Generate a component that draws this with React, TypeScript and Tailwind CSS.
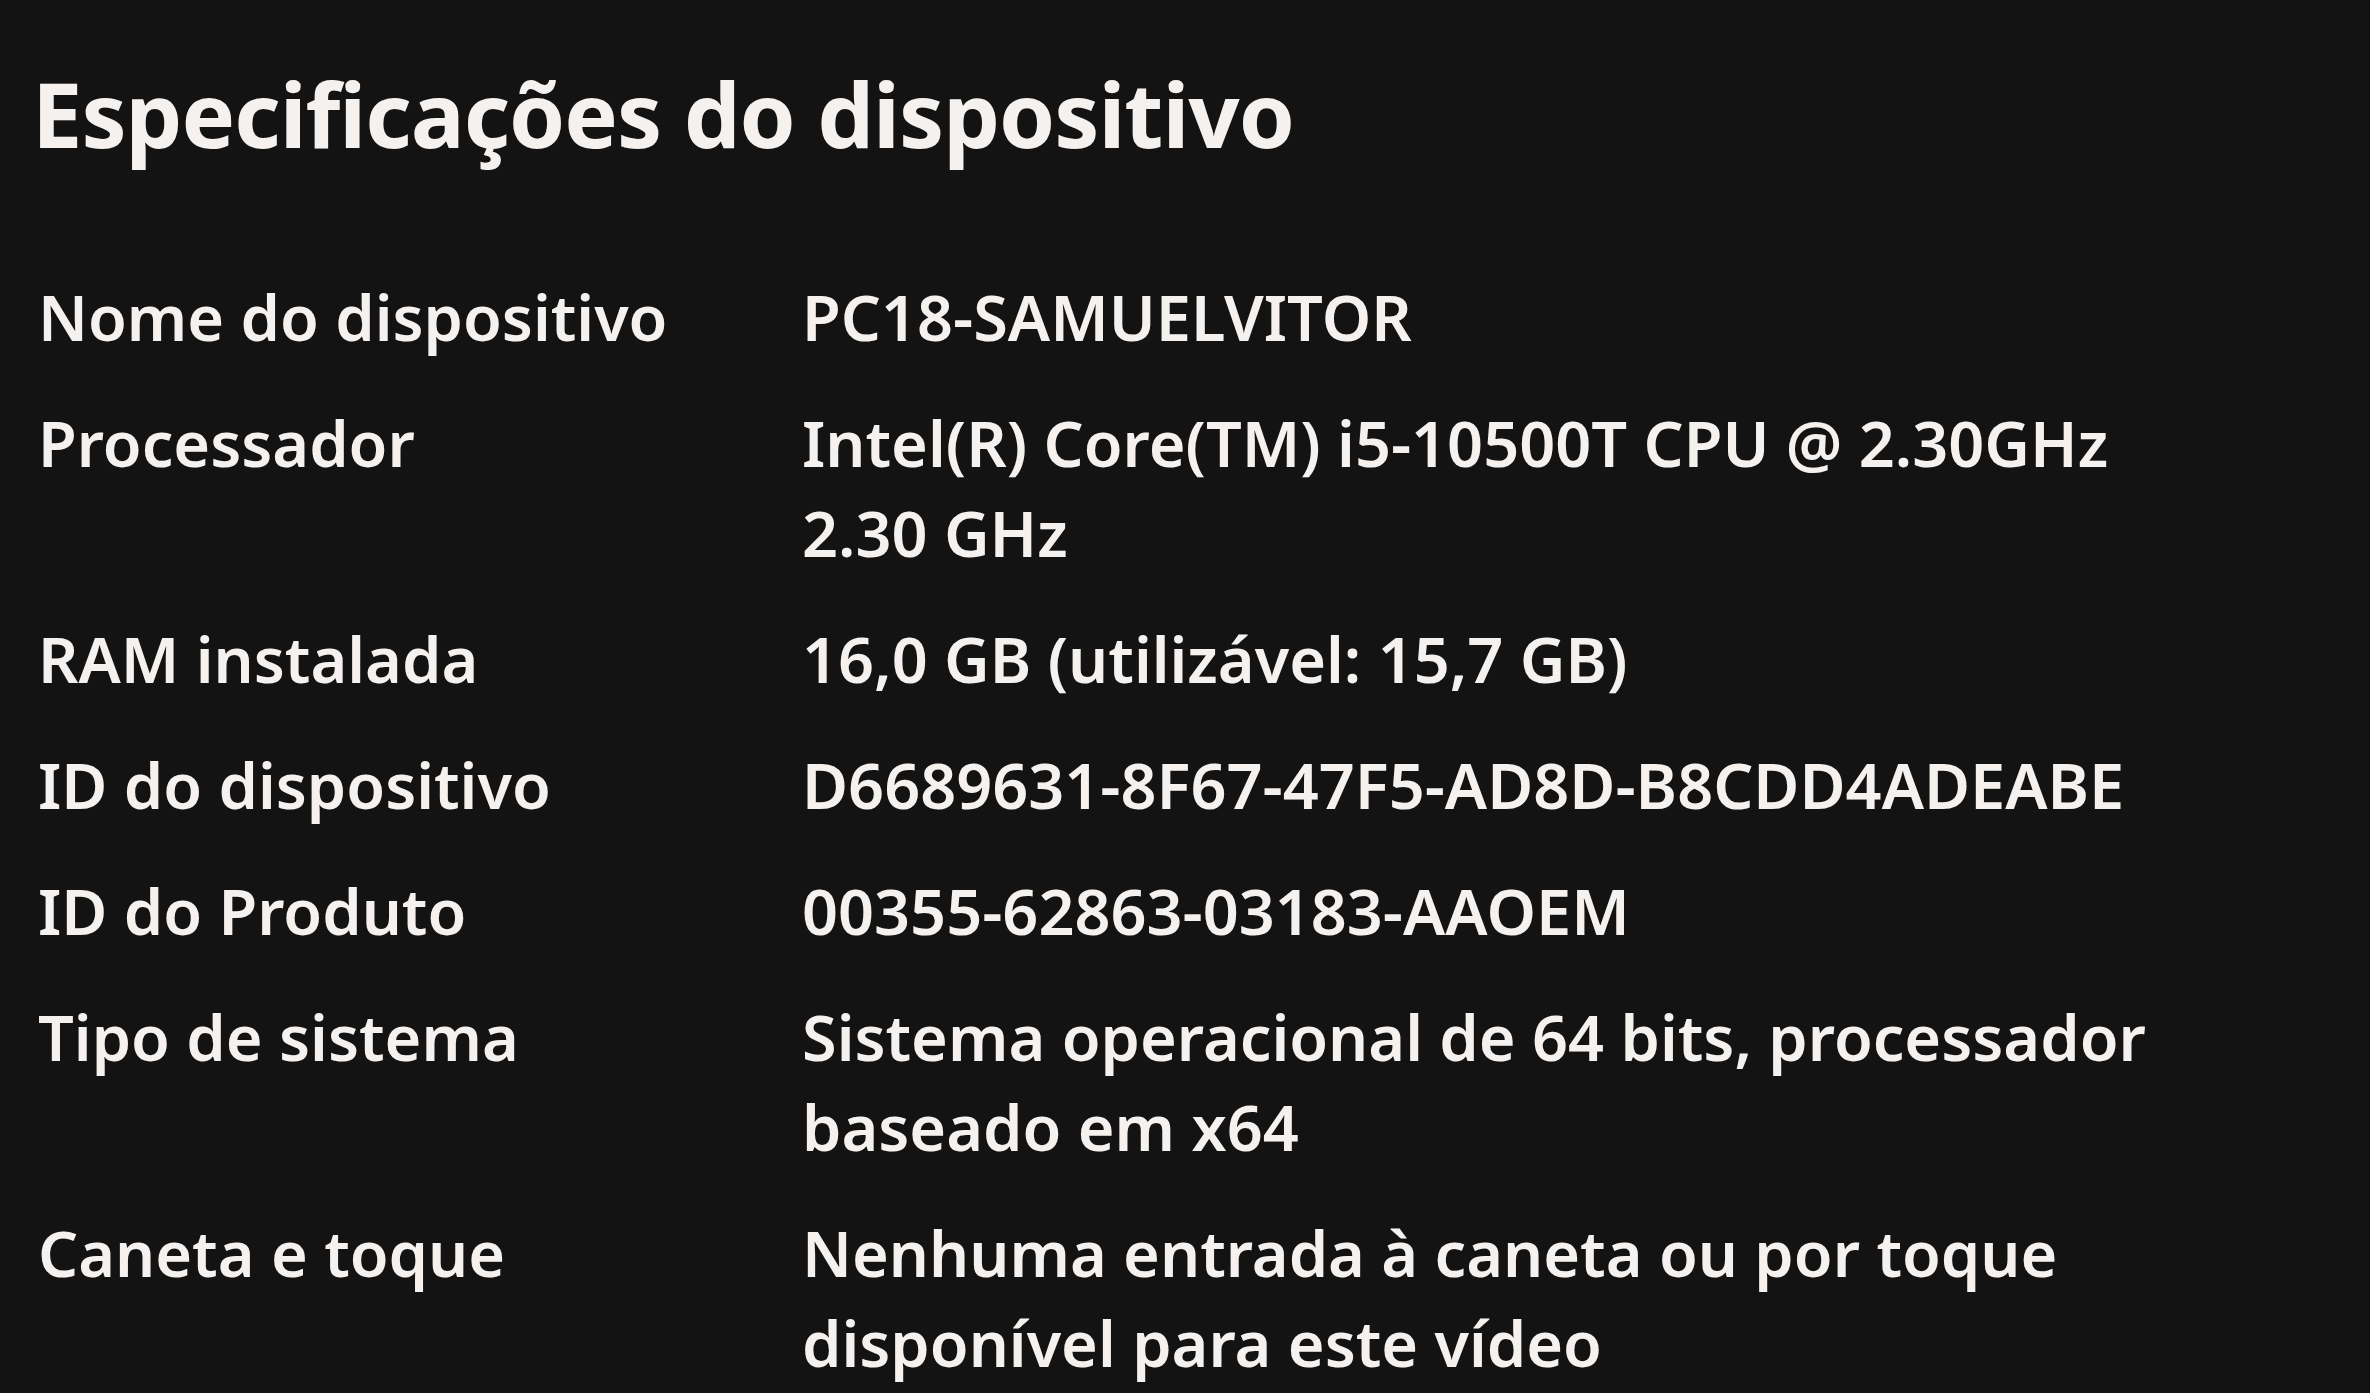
const specs: { label: string; value: string[] }[] = [
  { label: "Nome do dispositivo", value: ["PC18-SAMUELVITOR"] },
  { label: "Processador", value: ["Intel(R) Core(TM) i5-10500T CPU @ 2.30GHz", "2.30 GHz"] },
  { label: "RAM instalada", value: ["16,0 GB (utilizável: 15,7 GB)"] },
  { label: "ID do dispositivo", value: ["D6689631-8F67-47F5-AD8D-B8CDD4ADEABE"] },
  { label: "ID do Produto", value: ["00355-62863-03183-AAOEM"] },
  { label: "Tipo de sistema", value: ["Sistema operacional de 64 bits, processador", "baseado em x64"] },
  { label: "Caneta e toque", value: ["Nenhuma entrada à caneta ou por toque", "disponível para este vídeo"] },
]

export default function App() {
  return (
    <div className="min-h-screen w-full bg-[#131314] text-[#f4f1ee] font-['Noto_Sans',sans-serif] overflow-hidden">
      <div className="pl-[32px] pt-[52px]">
        <h1 className="text-[90px] leading-[122px] font-bold tracking-[-1px]">Especificações do dispositivo</h1>

        <div className="mt-[98px] pl-[6px] flex flex-col gap-[36px]">
          {specs.map((s) => (
            <div key={s.label} className="flex text-[63px] leading-[90px] font-semibold">
              <div className="w-[764px] shrink-0">{s.label}</div>
              <div className="flex flex-col">
                {s.value.map((line) => (
                  <span key={line}>{line}</span>
                ))}
              </div>
            </div>
          ))}
        </div>
      </div>
    </div>
  )
}
